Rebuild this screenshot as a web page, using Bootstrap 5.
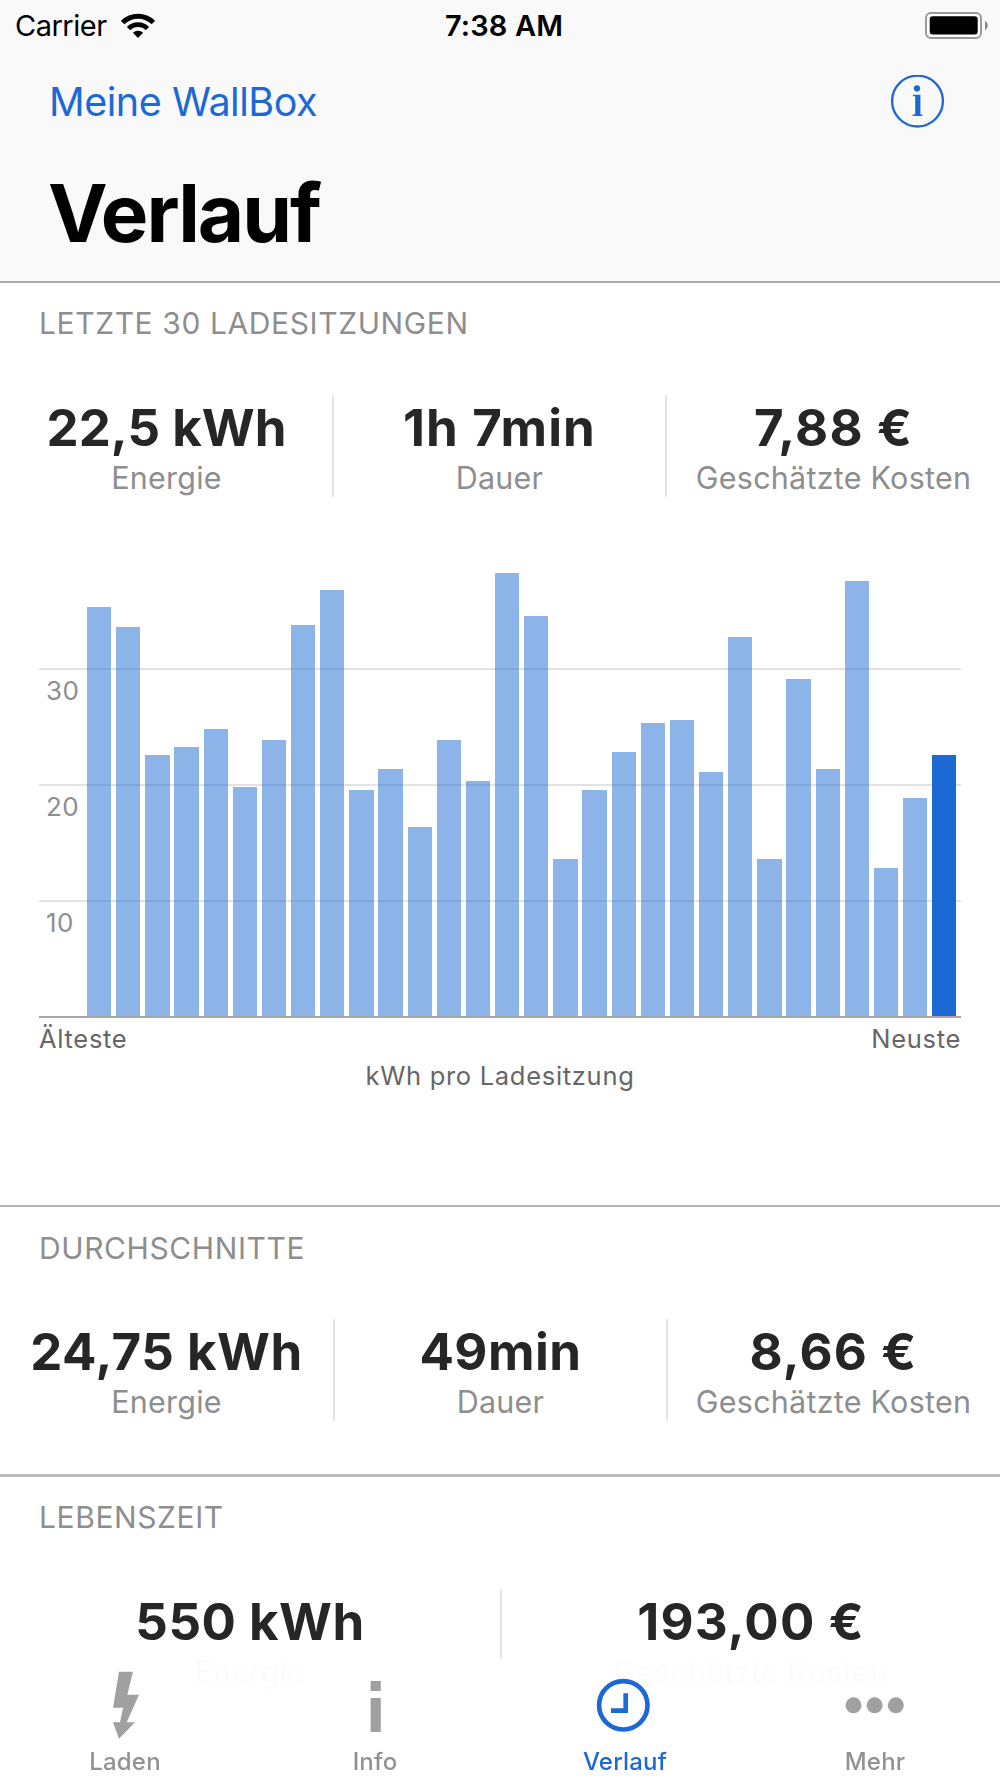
<!DOCTYPE html>
<html lang="de">
<head>
<meta charset="utf-8">
<meta name="viewport" content="width=device-width, initial-scale=1">
<title>Verlauf</title>
<link href="https://cdn.jsdelivr.net/npm/bootstrap@5.3.0/dist/css/bootstrap.min.css" rel="stylesheet">
<style>
  :root { --brand: #1c69d4; --muted: #8e8e8e; }
  body { font-family: Inter, "Liberation Sans", sans-serif; color: #262626; background: #fff; height: 1778px; overflow: hidden; }
  svg { display: block; }

  .app-header { background: #f9f9f9; height: 283px; border-bottom: 2px solid #aaa; }
  .status-bar { height: 50px; padding: 0 12px 0 15px; font-size: 29px; line-height: 50px; color: #000; }
  .carrier { letter-spacing: -.5px; padding-top: 1px; }
  .wifi { margin-left: 14px; }
  .clock { letter-spacing: .15px; font-weight: 600; padding: 1px 0 0 5px; }
  .nav-row { height: 102px; padding: 0 56px 0 49px; }
  .back-link { color: var(--brand); font-size: 39.5px; letter-spacing: -.47px; padding-top: 4px; }
  .page-title { font-size: 80px; font-weight: 700; line-height: 122px; letter-spacing: -2.05px; color: #000; padding-left: 48px; }

  .panel { padding-top: 25px; border-bottom: 2px solid #b4b4b4; }
  .panel-history { height: 924px; }
  .panel-history .stat-row { padding-left: 1px; }
  .panel-average { height: 270px; padding-top: 26px; border-bottom-width: 3px; border-color: #bebebe; }
  .panel-average .stat-row { padding-right: 1px; }
  .panel-title { font-size: 30px; line-height: 30px; font-weight: 400; letter-spacing: .6px; color: var(--muted); padding-left: 39px; margin-bottom: 57px; }
  .panel-average .panel-title { margin-bottom: 56px; }
  .stat { height: 102px; padding-top: 7px; white-space: nowrap; }
  .split-end { border-right: 2px solid #e4e4e4; }
  .split-start { border-left: 2px solid #e4e4e4; }
  .stat-value { font-size: 51px; line-height: 51px; font-weight: 700; letter-spacing: .5px; }
  .fit-tight { letter-spacing: 0; }
  .fit-wide { letter-spacing: 1.15px; }
  .stat-label { font-size: 30.5px; line-height: 36px; letter-spacing: .25px; color: var(--muted); margin-top: 7px; }

  .chart { margin: 67px 39px 0; }
  .plot { display: grid; height: 452px; border-bottom: 2px solid #a6a6a6; box-sizing: content-box; }
  .plot > div { grid-area: 1 / 1; }
  .grid-band { height: 116px; border-top: 2px solid #e3e3e3; font-size: 26px; line-height: 42px; letter-spacing: .4px; color: var(--muted); padding-left: 7px; }
  .bars { gap: 4.85px; padding: 0 4.6px 0 48px; }
  .bar { background: rgba(28, 105, 212, .5); flex: 1 1 0; }
  .bar-current { background: var(--brand); }
  .axis-text { font-size: 25.5px; letter-spacing: .7px; color: #666; line-height: 42px; }
  .axis-title { line-height: 32px; }

  .tab-bar { height: 119px; padding-top: 6px; background: rgba(255, 255, 255, .97); }
  .tab { color: #929292; font-size: 24px; font-weight: 500; line-height: 30px; letter-spacing: .2px; text-decoration: none; }
  .tab svg { margin: 0 auto 2px; fill: #a0a0a0; }
  .tab.current { color: var(--brand); }
</style>
<script src="https://cdn.jsdelivr.net/npm/bootstrap@5.3.0/dist/js/bootstrap.bundle.min.js"></script>
</head>
<body>
<header class="app-header">
  <div class="status-bar row g-0 align-items-center">
    <div class="col d-flex align-items-center">
      <span class="carrier">Carrier</span>
      <svg class="wifi" width="34" height="26" viewBox="0 0 34 26" fill="none" stroke="#000">
        <path d="M1.6 9.6A21.7 21.7 0 0 1 32.4 9.6" stroke-width="5"/>
        <path d="M7.6 15.6A13.2 13.2 0 0 1 26.4 15.6" stroke-width="4.8"/>
        <path d="M17 25 11.9 19.8A7.3 7.3 0 0 1 22.1 19.8Z" fill="#000" stroke="none"/>
      </svg>
    </div>
    <div class="col-auto clock">7:38 AM</div>
    <div class="col d-flex justify-content-end">
      <svg width="63" height="28" viewBox="0 0 63 28">
        <rect x="1" y="1" width="55" height="25" rx="5" fill="#fff" stroke="#999" stroke-width="2"/>
        <rect x="4.7" y="4.2" width="48" height="18.4" rx="3"/>
        <path d="M60 8.8Q62.8 10.6 62.8 13.6T60 18.4Z" fill="#888"/>
      </svg>
    </div>
  </div>
  <div class="nav-row d-flex align-items-center justify-content-between">
    <span class="back-link">Meine WallBox</span>
    <svg width="53" height="53" viewBox="0 0 53 53" fill="#1c69d4">
      <circle cx="26.5" cy="26.1" r="25.4" fill="none" stroke="#1c69d4" stroke-width="2.3"/>
      <circle cx="26" cy="13.4" r="3.1"/>
      <path d="M22 19.8h7.4v19.6h2v1.5h-9.8v-1.5h2.6V21.3h-2.2z"/>
    </svg>
  </div>
  <h1 class="page-title m-0">Verlauf</h1>
</header>

<main>
  <section class="panel panel-history">
    <h2 class="panel-title mt-0">LETZTE 30 LADESITZUNGEN</h2>
    <div class="stat-row row g-0 text-center">
      <div class="col-4 stat split-end"><div class="stat-value fit-tight">22,5 kWh</div><div class="stat-label">Energie</div></div>
      <div class="col-4 stat split-end"><div class="stat-value fit-wide">1h 7min</div><div class="stat-label">Dauer</div></div>
      <div class="col-4 stat"><div class="stat-value fit-wide">7,88 €</div><div class="stat-label">Geschätzte Kosten</div></div>
    </div>
    <div class="chart">
      <div class="plot">
        <div class="d-flex flex-column justify-content-end">
          <div class="grid-band">30</div>
          <div class="grid-band">20</div>
          <div class="grid-band">10</div>
        </div>
        <div class="bars d-flex align-items-end" id="bars"></div>
      </div>
      <div class="axis-text d-flex justify-content-between"><span>Älteste</span><span>Neuste</span></div>
      <div class="axis-text axis-title text-center">kWh pro Ladesitzung</div>
    </div>
  </section>

  <section class="panel panel-average">
    <h2 class="panel-title mt-0">DURCHSCHNITTE</h2>
    <div class="stat-row row g-0 text-center">
      <div class="col-4 stat"><div class="stat-value">24,75 kWh</div><div class="stat-label">Energie</div></div>
      <div class="col-4 stat split-start"><div class="stat-value">49min</div><div class="stat-label">Dauer</div></div>
      <div class="col-4 stat split-start"><div class="stat-value fit-wide">8,66 €</div><div class="stat-label">Geschätzte Kosten</div></div>
    </div>
  </section>

  <section class="panel border-0">
    <h2 class="panel-title mt-0">LEBENSZEIT</h2>
    <div class="stat-row row g-0 text-center">
      <div class="col-6 stat"><div class="stat-value">550 kWh</div><div class="stat-label">Energie</div></div>
      <div class="col-6 stat split-start"><div class="stat-value fit-wide">193,00 €</div><div class="stat-label">Geschätzte Kosten</div></div>
    </div>
  </section>
</main>

<nav class="tab-bar fixed-bottom">
  <div class="row g-0 text-center">
    <a class="tab col-3">
      <svg width="80" height="80" viewBox="0 0 80 80"><path d="M34 6.7H48L42.3 29.7H54L41.7 57.3H50L34 73.7 28 57.3H35L38 42.7H28Z"/></svg>
      Laden
    </a>
    <a class="tab col-3">
      <svg width="80" height="80" viewBox="0 0 80 80"><path d="M35.6 16h10.2v10H35.6zM35.6 33h10.2v34H35.6z"/></svg>
      Info
    </a>
    <a class="tab col-3 current">
      <svg width="80" height="80" viewBox="0 0 80 80"><g fill="none" stroke="#1c69d4" stroke-width="4.7"><circle cx="38.3" cy="40.3" r="24.2"/><path d="M40.7 28.2V45.7H26"/></g></svg>
      Verlauf
    </a>
    <a class="tab col-3">
      <svg width="80" height="80" viewBox="0 0 80 80"><circle cx="18.5" cy="40.3" r="8"/><circle cx="39.6" cy="40.3" r="8"/><circle cx="60.8" cy="40.3" r="8"/></svg>
      Mehr
    </a>
  </div>
</nav>

<script>
  // Energy per charging session in kWh, oldest first
  const sessions = [35.25, 33.5, 22.5, 23.2, 24.75, 19.75, 23.8, 33.7, 36.75, 19.5, 21.3, 16.3, 23.8, 20.25, 38.2,
                    34.5, 13.5, 19.5, 22.75, 25.25, 25.55, 21, 32.7, 13.5, 29.05, 21.3, 37.5, 12.75, 18.8, 22.5];
  const PX_PER_KWH = 11.6;
  document.getElementById('bars').innerHTML = sessions.map((v, i) =>
    `<div class="bar${i === sessions.length - 1 ? ' bar-current' : ''}" style="height:${(v * PX_PER_KWH).toFixed(1)}px"></div>`).join('');
</script>
</body>
</html>
